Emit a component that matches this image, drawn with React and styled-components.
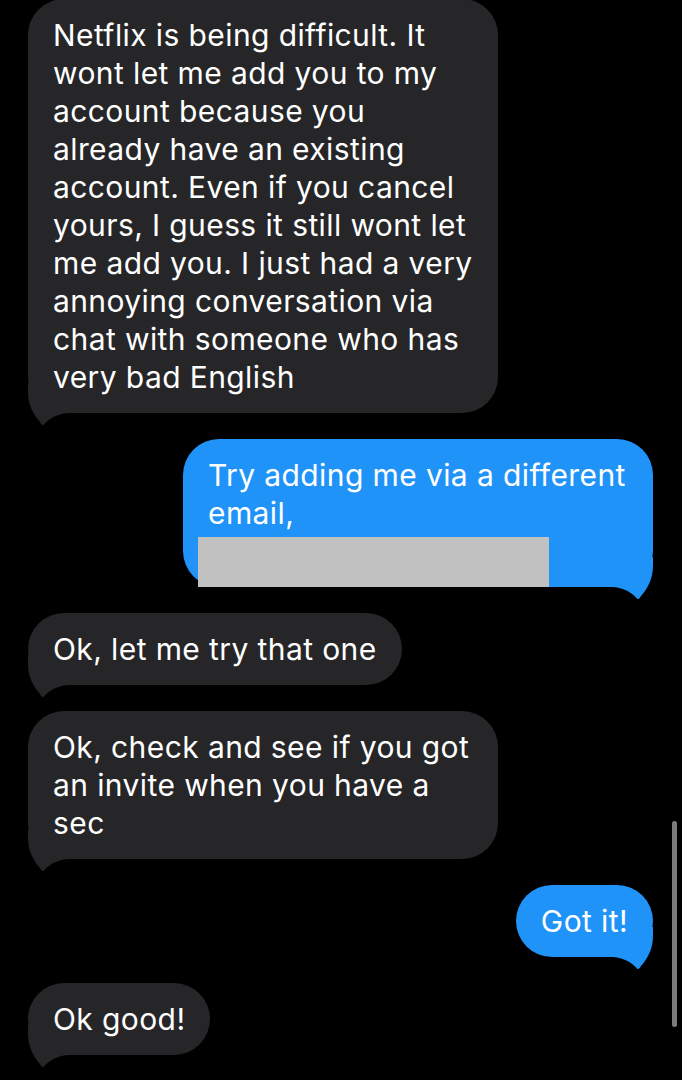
import React from 'react';
import styled, { createGlobalStyle } from 'styled-components';

const GlobalStyle = createGlobalStyle`
  html, body {
    margin: 0;
    padding: 0;
    background: #000;
  }
  body {
    font-family: Inter, "Noto Sans", sans-serif;
    -webkit-font-smoothing: antialiased;
  }
`;

const Screen = styled.div`
  position: relative;
  width: 682px;
  height: 1080px;
  overflow: hidden;
  background: #000;
`;

const Thread = styled.div`
  display: flex;
  flex-direction: column;
  gap: 26px;
  margin-top: -1px;
  padding: 0 29px 0 28px;
`;

const Bubble = styled.div`
  position: relative;
  align-self: ${p => (p.out ? 'flex-end' : 'flex-start')};
  width: ${p => (p.full ? '470px' : 'auto')};
  max-width: 470px;
  box-sizing: border-box;
  padding: ${p => (p.redacted ? '17px 25px 0 25px' : '17px 25px')};
  border-radius: 36px;
  background: ${p => (p.out ? '#2093f8' : '#262628')};
  color: #fff;
  font-size: 30px;
  line-height: 38px;
  letter-spacing: 0.4px;
  white-space: nowrap;
`;

const Line = styled.div`
  position: relative;
  z-index: 2;
`;

const Redaction = styled.div`
  position: relative;
  z-index: 3;
  width: 351px;
  height: 50px;
  margin: 5px 0 0 -10px;
  background: #c1c1c1;
`;

const TailSvg = styled.svg`
  position: absolute;
  bottom: -14px;
  ${p => (p.out ? 'right: 0; transform: scaleX(-1);' : 'left: 0;')}
  width: 44px;
  height: 44px;
  z-index: 1;
`;

const ScrollThumb = styled.div`
  position: absolute;
  right: 5px;
  top: 821px;
  width: 5px;
  height: 206px;
  border-radius: 3px;
  background: #7c7c7e;
`;

const Tail = ({ out }) => (
  <TailSvg out={out} viewBox="0 0 44 44">
    <path
      d="M0,0 L0,8 C0,22 5,31 12,39 Q14,43.5 16,41.5 C21,36 28,31 40,30 L44,30 L44,0 Z"
      fill={out ? '#2093f8' : '#262628'}
    />
  </TailSvg>
);

const messages = [
  {
    out: false,
    lines: [
      'Netflix is being difficult. It',
      'wont let me add you to my',
      'account because you',
      'already have an existing',
      'account. Even if you cancel',
      'yours, I guess it still wont let',
      'me add you. I just had a very',
      'annoying conversation via',
      'chat with someone who has',
      'very bad English',
    ],
  },
  { out: true, redacted: true, lines: ['Try adding me via a different', 'email,'] },
  { out: false, lines: ['Ok, let me try that one'] },
  { out: false, lines: ['Ok, check and see if you got', 'an invite when you have a', 'sec'] },
  { out: true, lines: ['Got it!'] },
  { out: false, lines: ['Ok good!'] },
];

export default function App() {
  return (
    <Screen>
      <GlobalStyle />
      <Thread>
        {messages.map((m, i) => (
          <Bubble key={i} out={m.out} redacted={m.redacted} full={m.lines.length > 1}>
            {m.lines.map((l, j) => (
              <Line key={j}>{l}</Line>
            ))}
            {m.redacted && <Redaction />}
            <Tail out={m.out} />
          </Bubble>
        ))}
      </Thread>
      <ScrollThumb />
    </Screen>
  );
}
